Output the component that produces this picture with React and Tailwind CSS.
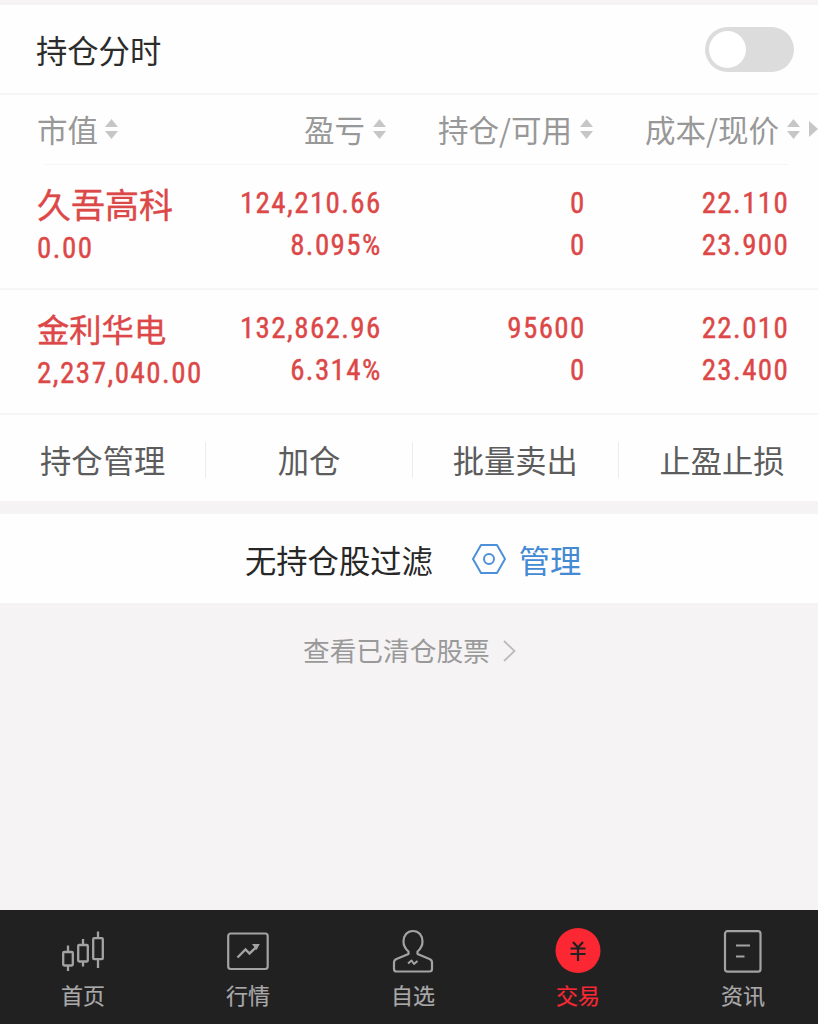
const NUM = "font-['Roboto_Condensed','Roboto','Noto_Sans_CJK_SC',sans-serif] [font-stretch:85%]";

function SortArrows() {
  return (
    <svg className="mb-[2px] h-5 w-[13px] shrink-0" viewBox="0 0 13 20" fill="#c6c6c6">
      <path d="M6.5 0 13 8H0zM6.5 20 13 12H0z" />
    </svg>
  );
}

function HeadCell({ label, className }) {
  return (
    <div className={`flex items-center whitespace-nowrap ${className}`}>
      <span>{label}</span>
      <SortArrows />
    </div>
  );
}

function Pair({ top, bottom, className }) {
  return (
    <div className={`flex flex-col pt-[17px] text-right tracking-[1.4px] ${className}`}>
      <span className="-mr-[0.8px] h-[42px] leading-[42px]">{top}</span>
      <span className="-mr-[0.8px] h-[42px] leading-[42px]">{bottom}</span>
    </div>
  );
}

function Holding({ name, nameClass, value, profit, rate, held, usable, cost, price }) {
  return (
    <div className={`flex h-[125px] border-b-2 border-[#f6f6f6] pl-[37px] text-[29px] text-[#dc4747] [-webkit-text-stroke:0.4px_#dc4747] ${NUM}`}>
      <div className="flex w-[183px] flex-col whitespace-nowrap pt-[20px]">
        <span className={`h-[42px] leading-[43px] ${nameClass}`}>{name}</span>
        <span className="h-[42px] tracking-[1.5px] leading-[42px]">{value}</span>
      </div>
      <Pair top={profit} bottom={rate} className="w-[161px]" />
      <Pair top={held} bottom={usable} className="w-[204px]" />
      <Pair top={cost} bottom={price} className="w-[203.5px]" />
    </div>
  );
}

function CandlesIcon() {
  return (
    <svg className="size-[46px]" viewBox="0 0 46 46" fill="none" stroke="#a3a3a3" strokeWidth="2.3">
      <rect x="3.2" y="25" width="9.600" height="13.5" rx="1" />
      <path d="M8 18.5V25M8 38.5V44" />
      <rect x="18.2" y="18" width="9.600" height="16.5" rx="1" />
      <path d="M23 12V18M23 34.500V39.500" />
      <rect x="33.200" y="11.200" width="9.600" height="21" rx="1" />
      <path d="M38 4.500V11M38 32V41" />
    </svg>
  );
}

function QuotesIcon() {
  return (
    <svg className="size-[46px]" viewBox="0 0 46 46" fill="none" stroke="#a3a3a3" strokeWidth="2.2">
      <rect x="3.200" y="6.500" width="39.500" height="35.500" rx="2.500" />
      <path d="M12.500 30.500 20.500 22.500 24.500 26.500 32 19.500" strokeWidth="2.400" />
      <path d="M27 17H34.800L31.500 23Z" fill="#a3a3a3" stroke="none" />
    </svg>
  );
}

function PersonIcon() {
  return (
    <svg className="size-[46px]" viewBox="0 0 46 46" fill="none" stroke="#a3a3a3" strokeWidth="2.2" strokeLinejoin="round">
      <path d="M18.500 24.500C15.500 22 13.500 18.500 13.500 14.500C13.500 8.500 17 4 23 4S32.500 8.500 32.500 14.500C32.500 18.500 30.500 22 27.500 24.500V27L39.500 32Q42 33.200 42 35.500V42Q42 44.500 39.500 44.500H6.500Q4 44.500 4 42V35.500Q4 33.200 6.500 32L18.500 27Z" />
      <path d="M18 36.500 21.500 33.500 24 37 27.500 34" strokeWidth="2" />
    </svg>
  );
}

function TradeIcon() {
  return (
    <svg className="size-[46px]" viewBox="0 0 46 46" fill="none">
      <circle cx="23" cy="23.500" r="22.500" fill="#fb2834" />
      <path d="M18 15 23 20.500 28 15M15.500 21.500H30.500M15.500 27H30.500M23 21V34" stroke="#222122" strokeWidth="2.200" />
    </svg>
  );
}

function NewsIcon() {
  return (
    <svg className="size-[46px]" viewBox="0 0 46 46" fill="none" stroke="#a3a3a3" strokeWidth="2.2">
      <rect x="5" y="4.200" width="35.500" height="40.500" rx="2.500" />
      <path d="M16 18.500H30M16 29.500H24.500" strokeWidth="2.200" />
    </svg>
  );
}

const TABS = [
  { label: "首页", Icon: CandlesIcon },
  { label: "行情", Icon: QuotesIcon },
  { label: "自选", Icon: PersonIcon },
  { label: "交易", Icon: TradeIcon, active: true },
  { label: "资讯", Icon: NewsIcon },
];

export default function App() {
  return (
    <div className="flex h-[1024px] w-[818px] flex-col overflow-hidden bg-[#f5f3f4] font-['Noto_Sans_CJK_SC',sans-serif]">
      <section className="mt-[5px] bg-[#fefefe]">
        <div className="flex h-[90px] items-center justify-between border-b-2 border-[#f6f6f6] pl-9 pr-6 text-[31.3px] text-[#2c2c2c]">
          <h1 className="pt-[2px]">持仓分时</h1>
          <button className="flex h-[45px] w-[89px] items-center rounded-full bg-[#dcdcdc] pl-1">
            <span className="size-[37px] rounded-full bg-white" />
          </button>
        </div>

        <div className="flex h-[69px] items-center text-[30.5px] text-[#989898] pl-[37px]">
          <HeadCell label="市值" className="w-[183px] gap-[7px]" />
          <HeadCell label="盈亏" className="w-[166px] justify-end gap-[8px]" />
          <HeadCell label="持仓/可用" className="w-[207px] justify-end gap-[8px]" />
          <HeadCell label="成本/现价" className="w-[207px] justify-end gap-[8px]" />
          <svg className="mb-[2px] ml-[9px] h-4 w-[9px]" viewBox="0 0 9 16" fill="#c6c6c6">
            <path d="M0 0 9 8 0 16z" />
          </svg>
        </div>
        <div className="ml-[45px] mr-[30px] h-px bg-[#f5f5f5]" />

        <Holding name="久吾高科" nameClass="text-[34px]" value="0.00" profit="124,210.66" rate="8.095%" held="0" usable="0" cost="22.110" price="23.900" />
        <Holding name="金利华电" nameClass="text-[32.3px]" value="2,237,040.00" profit="132,862.96" rate="6.314%" held="95600" usable="0" cost="22.010" price="23.400" />

        <div className="flex h-[86px] items-center pt-[3px] text-[31.3px] text-[#5c5c5c]">
          {["持仓管理", "加仓", "批量卖出", "止盈止损"].map((label, i) => (
            <button key={label} className={`h-[36px] w-[206.3px] shrink-0 whitespace-nowrap leading-[36px] ${i < 3 ? "border-r border-[#ececec]" : ""}`}>
              {label}
            </button>
          ))}
        </div>
      </section>

      <section className="mt-[13px] flex h-[89px] items-center bg-[#fefefe] pl-[245px] pt-[3px] text-[31.300px] text-[#272727]">
        <span>无持仓股过滤</span>
        <svg className="mb-[3px] ml-[39px] h-[32px] w-[34px]" viewBox="0 0 34 32" fill="none" stroke="#4d90d9" strokeWidth="2" strokeLinejoin="round">
          <path d="M9 2H25L33 16 25 30H9L1 16Z" />
          <circle cx="17" cy="16" r="5" />
        </svg>
        <span className="ml-[13px] text-[#438ad3]">管理</span>
      </section>

      <div className="flex h-[95px] items-center pl-[303px] text-[26.700px] text-[#9a999a]">
        <span>查看已清仓股票</span>
        <svg className="ml-[13px] h-[22px] w-[13px]" viewBox="0 0 13 22" fill="none" stroke="#bdbcbd" strokeWidth="1.800">
          <path d="M1 1 11.500 11 1 21" />
        </svg>
      </div>

      <nav className="mt-auto flex h-[114px] shrink-0 bg-[#222122]">
        {TABS.map(({ label, Icon, active }) => (
          <button key={label} className="flex w-[165px] shrink-0 flex-col items-center pl-px pt-[17px]">
            <Icon />
            <span className={`mt-[5px] text-[22px] leading-[32px] [-webkit-text-stroke:0.2px_currentColor] ${active ? "text-[#fb2834]" : "text-[#a9a9a9]"}`}>{label}</span>
          </button>
        ))}
      </nav>
    </div>
  );
}
